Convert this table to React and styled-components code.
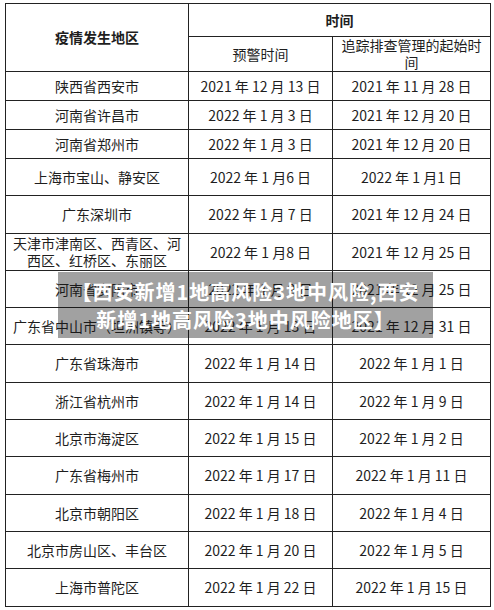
import React from "react";
import styled, { createGlobalStyle } from "styled-components";

const Global = createGlobalStyle`
  html, body {
    margin: 0;
    padding: 0;
    background: #ffffff;
  }
  body {
    font-family: "Noto Sans CJK SC", "Noto Sans", sans-serif;
    color: #1e1e1e;
  }
`;

const Page = styled.div`
  position: relative;
  width: 494px;
  height: 610px;
  padding: 3px 0 0 5px;
  box-sizing: border-box;
`;

const Table = styled.table`
  border-collapse: collapse;
  table-layout: fixed;
  width: 485px;
  font-size: 14px;
  line-height: 17px;
`;

const Row = styled.tr`
  height: ${(p) => p.$h}px;
`;

const Cell = styled.td`
  border: 1px solid #222;
  padding: 0 5px;
  text-align: center;
  vertical-align: middle;
  font-weight: ${(p) => (p.$bold ? 700 : 400)};
  white-space: ${(p) => (p.$nowrap ? "nowrap" : "normal")};
`;

const Caption = styled.div`
  position: absolute;
  left: 58px;
  top: 272px;
  width: 375px;
  height: 66px;
  padding-top: 6px;
  box-sizing: border-box;
  background: rgba(20, 20, 20, 0.4);
  color: #ffffff;
  font-size: 20px;
  font-weight: 700;
  line-height: 28px;
  text-align: center;
  letter-spacing: 1px;
`;

const Line = styled.div`
  white-space: nowrap;
`;

const rows = [
  ["陕西省西安市", "2021 年 12 月 13 日", "2021 年 11 月 28 日", 29],
  ["河南省许昌市", "2022 年 1 月 3 日", "2021 年 12 月 20 日", 29],
  ["河南省郑州市", "2022 年 1 月 3 日", "2021 年 12 月 20 日", 29],
  ["上海市宝山、静安区", "2022 年 1 月6 日", "2022 年 1 月1 日", 37],
  ["广东深圳市", "2022 年 1 月 7 日", "2021 年 12 月 24 日", 38],
  ["天津市津南区、西青区、河西区、红桥区、东丽区", "2022 年 1 月8 日", "2021 年 12 月 25 日", 37],
  ["河南省安阳市", "2022 年 1 月 9 日", "2021 年 12 月 25 日", 37],
  ["广东省中山市（坦洲镇等）", "2022 年 1 月 13 日", "2021 年 12 月 31 日", 37],
  ["广东省珠海市", "2022 年 1 月 14 日", "2022 年 1 月 1 日", 38],
  ["浙江省杭州市", "2022 年 1 月 14 日", "2022 年 1 月 9 日", 37],
  ["北京市海淀区", "2022 年 1 月 15 日", "2022 年 1 月 2 日", 37],
  ["广东省梅州市", "2022 年 1 月 17 日", "2022 年 1 月 11 日", 38],
  ["北京市朝阳区", "2022 年 1 月 18 日", "2022 年 1 月 4 日", 37],
  ["北京市房山区、丰台区", "2022 年 1 月 20 日", "2022 年 1 月 5 日", 37],
  ["上海市普陀区", "2022 年 1 月 22 日", "2022 年 1 月 15 日", 38],
];

export default function App() {
  return (
    <Page>
      <Global />
      <Table>
        <colgroup>
          <col style={{ width: 183 }} />
          <col style={{ width: 144 }} />
          <col style={{ width: 158 }} />
        </colgroup>
        <tbody>
          <Row $h={33}>
            <Cell rowSpan={2} $bold>
              疫情发生地区
            </Cell>
            <Cell colSpan={2} $bold>
              时间
            </Cell>
          </Row>
          <Row $h={33}>
            <Cell>预警时间</Cell>
            <Cell>追踪排查管理的起始时间</Cell>
          </Row>
          {rows.map(([place, warn, start, h]) => (
            <Row key={place} $h={h}>
              <Cell>{place}</Cell>
              <Cell $nowrap>{warn}</Cell>
              <Cell $nowrap>{start}</Cell>
            </Row>
          ))}
        </tbody>
      </Table>
      <Caption>
        <Line>【西安新增1地高风险3地中风险,西安</Line>
        <Line>新增1地高风险3地中风险地区】</Line>
      </Caption>
    </Page>
  );
}
